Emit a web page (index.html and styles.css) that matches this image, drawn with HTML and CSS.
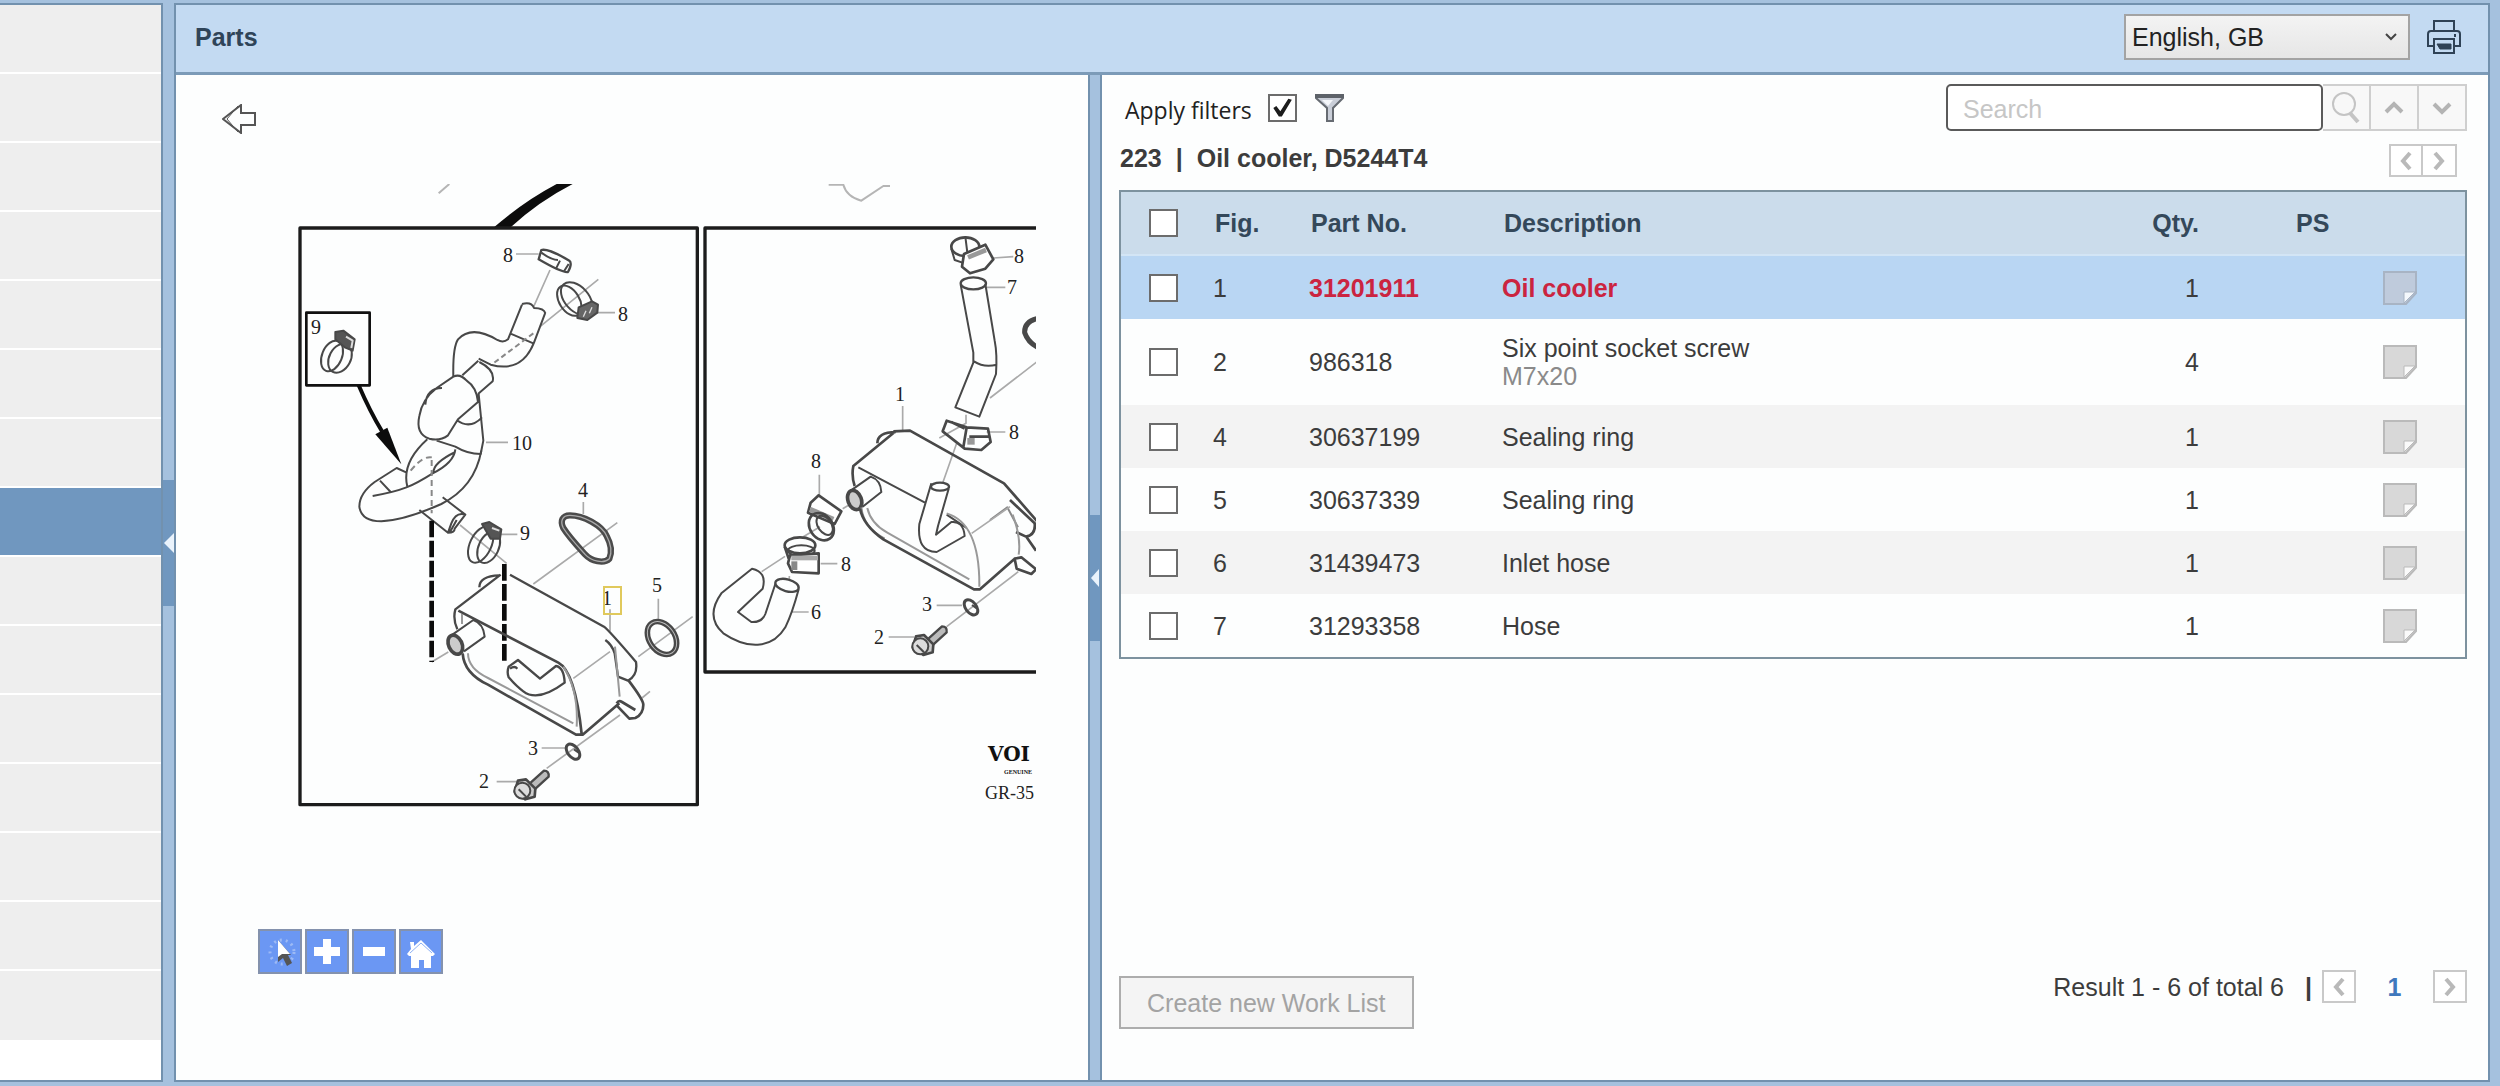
FILE: index.html
```html
<!DOCTYPE html>
<html lang="en-GB">
<head>
<meta charset="utf-8">
<meta name="viewport" content="width=device-width, initial-scale=1">
<title>Parts</title>
<link rel="stylesheet" href="styles.css">
</head>
<body>
<div class="app">
  <ul class="sidebar" aria-label="Groups">
    <li></li><li></li><li></li><li></li><li></li><li></li><li></li>
    <li class="selected"></li>
    <li></li><li></li><li></li><li></li><li></li><li></li><li></li>
  </ul>
  <div class="splitter">
    <button class="splitter-handle" aria-label="Collapse group list"><svg width="10" height="20" viewBox="0 0 10 20"><path d="M10 0v20L0 10z" fill="#eaf3fc"/></svg></button>
  </div>
  <main class="main">
    <header class="titlebar">
      <h1>Parts</h1>
      <div class="select-box">
        <select aria-label="Language"><option>English, GB</option></select>
        <svg width="12" height="8" viewBox="0 0 12 8" fill="none" stroke="#444" stroke-width="2"><path d="M1 1l5 5 5-5"/></svg>
      </div>
      <button class="icon-button" aria-label="Print">
        <svg width="34" height="34" viewBox="0 0 34 34" fill="none" stroke="#2f4256" stroke-width="2"><path d="M7 11V1h20v10M6 26H1V14q0-3 3-3h26q3 0 3 3v12h-5"/><path d="M7 19h20v14H7z"/><path d="M10 24h14v5H13z" fill="#2f4256" stroke-width="1"/><path d="M28 14v3" /></svg>
      </button>
    </header>
    <div class="panes">
      <section class="viewer" aria-label="Illustration">
        <button class="icon-button" aria-label="Back">
          <svg width="34" height="30" viewBox="0 0 34 30" fill="none" stroke="#555" stroke-width="2"><path d="M1 15L19 1v8h14v12H19v8z"/><path d="M16 2L5 15l11 13" stroke-width="1"/></svg>
        </button>
        <svg class="diagram" width="746" height="640" viewBox="0 0 746 640" role="img" aria-label="Oil cooler exploded view">
          <!-- left frame, upper half: clamps and hose -->
          <g transform="translate(0 -14) scale(.33333)" fill="none" stroke="#484848" stroke-width="6" stroke-linejoin="round">
            <path d="M446 70l32-28" stroke="#b5b5b5"/>
            <path d="M612 172Q700 95 800 42h48Q745 95 662 172z" fill="#0c0c0c" stroke="none"/>
            <path d="M30 174H1222V1904H30z" stroke="#1c1c1c" stroke-width="10"/>
            <path d="M49 428H239V646H49z" stroke="#111" stroke-width="8"/>
            <g id="clamp9"><ellipse cx="126" cy="558" rx="30" ry="48" transform="rotate(22 126 558)"/><ellipse cx="150" cy="565" rx="32" ry="46" transform="rotate(28 150 565)"/><path d="M136 486l24-4 34 26-6 34-24-10-28-24z" fill="#555"/><path d="M168 500l20 12-4 22"  stroke="#ddd"/></g>
            <path d="M206 646Q240 725 276 784" stroke="#0c0c0c" stroke-width="12"/>
            <path d="M256 793l36-20 42 110z" fill="#0c0c0c" stroke="none"/>
            <g stroke="#aaa" stroke-width="5"><path d="M678 252h68M780 300l-50 112M750 470L925 328M915 428h60M588 817h66"/></g>
            <path d="M754 240q20-6 84 32 10 8-4 34-16 4-88-38z" stroke-width="7"/><path d="M754 248q30 22 50 22M810 272l-12 24M836 282l-14 22"/>
            <ellipse cx="860" cy="386" rx="36" ry="58" transform="rotate(-42 860 386)"/><ellipse cx="838" cy="392" rx="30" ry="50" transform="rotate(-32 838 392)"/>
            <path d="M866 412l40-18 18 10-2 24-30 22-30-6z" fill="#666"/><path d="M880 440l8-18M898 430l8-18" stroke="#ddd" stroke-width="4"/>
            <path d="M696 404l-42 104q-14 12-32 2c-50-30-90-32-118-2q-16 24-14 112M766 428l-34 90c-24 60-64 84-130 66l-36-18M696 402q28-8 36 12 30 0 34 16M660 490l70 30M565 572l-48 44M568 576q48 24 40 58l-44 38"/>
            <path d="M730 490l-120 90" stroke-dasharray="16 10" stroke="#888"/>
            <path d="M490 620q20-10 40 12 30 20 34 64l-60 52-30 48q-24 18-56 10-42-14-30-68 8-50 52-84zM406 704q4-50 50-50M500 750q40 30 76-8M566 672l14 140-8 40q-40 0-76-22l-56-18"/>
            <path d="M412 808q-78 70-60 142M496 838q-4 40-68 72c-60 38-90 52-180 68M574 842q-20 110-120 160c-90 40-140 50-180 52q-60 0-66-44 0-40 46-74l66-42 30 14M430 908q0-30 66-62M270 932l32 34"/>
            <path d="M362 902q40-50 70-38M425 870v160" stroke-dasharray="18 12" stroke="#888"/>
            <path d="M388 1020l86 68q20 0 20-12l32-42-68-52M526 1034q-28-10-42 26l-10 28M500 1050l-20 36"/>
          </g>
          <!-- left frame, lower half: oil cooler -->
          <g transform="translate(0 316) scale(.33333)" fill="none" stroke="#484848" stroke-width="6" stroke-linejoin="round">
            <g stroke="#aaa" stroke-width="5"><path d="M510 75l140 115M632 103h50M730 252L982 68M880 6v36M960 328v66M1105 296v64M1045 470L1208 350M850 535L960 455M425 486l50-30M990 645L770 805M1080 574l-24 20M755 744h70M620 845h66"/></g>
            <path d="M425 62v424M643 192v294" stroke="#0c0c0c" stroke-width="14" stroke-dasharray="50 10"/>
            <ellipse cx="572" cy="134" rx="32" ry="58" transform="rotate(25 572 134)"/><ellipse cx="596" cy="142" rx="30" ry="50" transform="rotate(25 596 142)"/><path d="M576 72l22-6 36 22-4 28-28 0z" fill="#555"/><path d="M606 84l22 8" stroke="#ddd"/>
            <g id="gasket4"><path d="M840 46c40 0 96 30 110 62 14 26 16 50 8 68-16 16-54 8-72-12-20-22-50-54-66-80-10-20-4-38 20-38z" stroke="#4b4b4b" stroke-width="19"/><path d="M840 46c40 0 96 30 110 62 14 26 16 50 8 68-16 16-54 8-72-12-20-22-50-54-66-80-10-20-4-38 20-38z" stroke="#aaa" stroke-width="4"/></g>
            <ellipse cx="1116" cy="414" rx="38" ry="54" transform="rotate(-35 1116 414)" stroke-width="17"/><ellipse cx="1116" cy="414" rx="38" ry="54" transform="rotate(-35 1116 414)" stroke-width="3" stroke="#bbb"/>
            <g class="cooler"><path d="M632 224L496 328q-8 30 6 60M660 224L942 380q14 10 96 106 6 40-24 56l-30-12-10-70q-8-26-28-40M568 262q0-34 60-36" stroke-width="7"/>
            <path d="M505 332l300 156q50 26 70 214M518 460q4 60 76 94l264 150 20 0 110-94M980 610q6-10 16-4l40 24M1016 542q44 58 44 72 0 28-24 40l-18 2-38-40" stroke-width="8"/>
            <path d="M516 342v30M534 460q0 46 60 74l256 136M820 500q46 70 40 180M975 440l14 150" stroke="#999"/>
            <ellipse cx="496" cy="434" rx="20" ry="30" transform="rotate(-25 496 434)" fill="#ccc" stroke-width="11"/><path d="M484 406l66-46q30 10 34 50l-62 44"/></g>
            <path d="M656 500l28-20 66 56 48-38q24 4 26 50-80 60-124 26-20-14-44-42-6-16 0-32zM660 506q14-10 22 0" stroke-width="7"/>
            <g id="bolt"><path d="M722 848l40-36q16 0 14 18l-46 42" fill="#bbb" stroke-width="7"/><path d="M684 842l24-4 28 28-2 24-28 8-32-22z" fill="#ccc" stroke-width="8"/><circle cx="697" cy="872" r="24" fill="#ddd"/><path d="M686 868l22 22"/></g>
            <g id="washer"><ellipse cx="849" cy="755" rx="16" ry="26" transform="rotate(-38 849 755)" stroke-width="9"/><path d="M852 748l14 10"/></g>
          </g>
          <!-- right frame, upper half -->
          <g transform="translate(400 -14) scale(.33333)" fill="none" stroke="#484848" stroke-width="6" stroke-linejoin="round">
            <path d="M416 44h44q10 36 54 48l66-44h20" stroke="#b5b5b5"/>
            <path d="M1060 174H45V1506H1060" stroke="#1c1c1c" stroke-width="10"/>
            <g stroke="#aaa" stroke-width="5"><path d="M910 264l60-4M890 352h56M900 684l140-108M638 708v74M890 786h56M388 914v66M828 734v26l-80 44M800 820l-48 136M458 1016l20-12"/></g>
            <ellipse cx="826" cy="230" rx="42" ry="28" stroke-width="8"/><path d="M784 236l10 34 30 10M826 200l6 48" stroke-width="6"/><path d="M822 252l64-28 24 44-24 28-46 14-24-20z" fill="#fff" stroke-width="8"/><path d="M834 262l54-22" stroke="#999" stroke-width="14"/>
            <ellipse cx="850" cy="340" rx="38" ry="18" stroke-width="7"/>
            <path d="M812 344l38 204v30l-54 134 72 28 50-128q4-60-4-100l-28-170M852 574q30 20 68 10" />
            <path d="M1050 444q-48 8-46 44 10 30 40 44" stroke-width="15"/>
            <path d="M770 752l60 20 64 4 8 40-28 24-50-4-66-52zM830 772l-10 60M838 800h60M784 756l40 20" stroke-width="8"/><path d="M832 804h22v20h-22z" fill="#999" stroke="none"/>
            <path d="M614 786L490 888q-6 30 4 60M610 784l50-2L942 940l110 126M562 820q0-34 56-34" stroke-width="8"/>
            <path d="M505 892l200 106M770 1034l60 40" stroke-width="6"/><ellipse cx="494" cy="990" rx="20" ry="30" transform="rotate(-20 494 990)" fill="#ccc" stroke-width="11"/><path d="M482 962l60-42q30 10 32 46l-56 44"/>
            <path d="M514 1012q6 60 70 94M900 1050l52-38 32 60" stroke="#888"/>
          </g>
          <!-- right frame, lower half -->
          <g transform="translate(400 316) scale(.33333)" fill="none" stroke="#484848" stroke-width="6" stroke-linejoin="round">
            <g stroke="#aaa" stroke-width="5"><path d="M845 100l115-80M340 110l50-30M215 215l70-46M392 191h50M306 336h50M740 316h76M596 411h76M985 215L770 380M298 228v14"/></g>
            <path d="M510 26q10 50 70 92l272 150 18 0 104-92M960 0l74 70q4 34-26 40l-30-14M1010 112l28 40M974 176l20-4 44 36-14 14-44-16z" stroke-width="8"/>
            <path d="M532 24q10 46 60 74l246 140M770 40q100 30 98 220M968 44q26 70 18 120" stroke="#999"/>
            <path d="M724-50L688 72q-8 84 52 84l84-48q-4-46-40-42l-46 38 6-26L776-34" fill="#fff" stroke-width="6"/><ellipse cx="750" cy="-40" rx="27" ry="12" fill="#fff" stroke-width="7"/>
            <path d="M386-14l68 48-20 38-80-34 8-30z" fill="#fff" stroke-width="8"/><path d="M360 28l70 30" stroke="#999" stroke-width="16"/><ellipse cx="394" cy="80" rx="34" ry="44" transform="rotate(-35 394 80)" stroke-width="8"/><ellipse cx="404" cy="76" rx="20" ry="32" transform="rotate(-35 404 76)"/>
            <ellipse cx="330" cy="136" rx="46" ry="24" stroke-width="8"/><ellipse cx="334" cy="152" rx="40" ry="16"/><path d="M284 140l12 36" stroke-width="8"/><path d="M300 166l86-6v60l-80-4-12-26z" fill="#fff" stroke-width="8"/><path d="M304 174h80" stroke="#aaa" stroke-width="14"/><path d="M304 184h18v26h-18z" fill="#888" stroke="none"/>
            <path d="M256 252l-30 90q-10 26-42 24l-40-30 74-70q14-50-32-60L94 280q-50 70 6 120c80 54 150 42 186-18q20-40 40-114" />
            <ellipse cx="291" cy="256" rx="36" ry="18" transform="rotate(15 291 256)" stroke-width="7"/>
            <use href="#bolt" x="-6" y="-433"/><use href="#washer" x="-6" y="-433"/>
          </g>
          <g class="callouts">
            <text x="213" y="78">8</text><text x="328" y="137">8</text><text x="21" y="150">9</text><text x="222" y="266">10</text>
            <text x="288" y="313">4</text><text x="230" y="356">9</text><text x="312" y="421">1</text><text x="362" y="408">5</text>
            <text x="238" y="571">3</text><text x="189" y="604">2</text>
            <text x="724" y="79">8</text><text x="717" y="110">7</text><text x="605" y="217">1</text><text x="719" y="255">8</text>
            <text x="521" y="284">8</text><text x="551" y="387">8</text><text x="521" y="435">6</text><text x="632" y="427">3</text><text x="584" y="460">2</text>
          </g>
          <text class="drawing-no" x="695" y="615">GR-35</text>
          <text class="brand" x="698" y="577">VOI</text>
          <text class="brand-sub" x="714" y="590">GENUINE</text>
          <path d="M314 403h17v27h-17z" fill="none" stroke="#e0c95c" stroke-width="2"/>
        </svg>
        <div class="view-tools">
          <button aria-label="Pointer"><svg width="40" height="40" viewBox="0 0 40 40"><circle cx="22" cy="20" r="12" fill="none" stroke="#9dbaf5" stroke-width="3" stroke-dasharray="2 4"/><path d="M18 8v22l5-4 4 8 5-3-4-8h3z" fill="#555"/><path d="M18 8v17l4-3h8z" fill="#fff"/></svg></button>
          <button aria-label="Zoom in"><svg width="40" height="40" viewBox="0 0 40 40"><path d="M16 7h8v8h9v9h-9v8h-8v-8H7v-9h9z" fill="#fff"/></svg></button>
          <button aria-label="Zoom out"><svg width="40" height="40" viewBox="0 0 40 40"><path d="M9 15h22v9H9z" fill="#fff"/></svg></button>
          <button aria-label="Home"><svg width="40" height="40" viewBox="0 0 40 40"><path d="M9 10h4v4l7-6 14 14-2 2h-2v12h-7v-8h-5v8h-8V24H8l-2-2 4-5z" fill="#fff"/><path d="M9 21l11-10 11 10" fill="none" stroke="#8fb2f5" stroke-width="1"/></svg></button>
        </div>
      </section>
      <div class="splitter pane-splitter">
        <button class="splitter-handle" aria-label="Collapse illustration"><svg width="8" height="18" viewBox="0 0 8 18"><path d="M8 0v18L0 9z" fill="#eaf3fc"/></svg></button>
      </div>
      <section class="list" aria-label="Part list">
        <div class="list-tools">
          <label class="filter-label" for="filters">Apply filters</label>
          <input class="check" type="checkbox" id="filters" checked>
          <button class="icon-button funnel" aria-label="Edit filters"><svg width="29" height="28" viewBox="0 0 29 28"><path d="M1 1h27v3L18 14v13h-6V14L1 4z" fill="#c9ced8" stroke="#666b72" stroke-width="2"/><path d="M0 0h29v4H0z" fill="#5d6269"/><path d="M7 6h11l-5 6z" fill="#f4f6fa"/></svg></button>
          <form class="search">
            <input type="search" placeholder="Search" aria-label="Search parts">
            <button type="button" aria-label="Find"><svg width="32" height="34" viewBox="0 0 32 34" fill="none" stroke="#c4c4c4"><circle cx="14" cy="13" r="11" stroke-width="2"/><path d="M20 22l8 9" stroke-width="4"/></svg></button>
            <button type="button" aria-label="Previous match"><svg width="20" height="14" viewBox="0 0 20 14" fill="none" stroke="#b4b4b4" stroke-width="4"><path d="M2 11l8-8 8 8"/></svg></button>
            <button type="button" aria-label="Next match"><svg width="20" height="14" viewBox="0 0 20 14" fill="none" stroke="#b4b4b4" stroke-width="4"><path d="M2 3l8 8 8-8"/></svg></button>
          </form>
        </div>
        <div class="list-heading">
          <h2><span>223</span><span>|</span><span>Oil cooler, D5244T4</span></h2>
          <div class="step">
            <button aria-label="Previous group"><svg width="12" height="20" viewBox="0 0 12 20"><path d="M10 2L3 10l7 8"/></svg></button>
            <button aria-label="Next group"><svg width="12" height="20" viewBox="0 0 12 20"><path d="M2 2l7 8-7 8"/></svg></button>
          </div>
        </div>
        <table class="parts">
          <thead>
            <tr><th class="c-check"><input class="check" type="checkbox" aria-label="Select all"></th><th class="c-fig">Fig.</th><th class="c-no">Part No.</th><th>Description</th><th class="c-qty">Qty.</th><th class="c-ps">PS</th><th class="c-note"></th></tr>
          </thead>
          <tbody>
            <tr class="current"><td class="c-check"><input class="check" type="checkbox" aria-label="Select 31201911"></td><td>1</td><td class="hot">31201911</td><td class="hot">Oil cooler</td><td class="c-qty">1</td><td></td><td><button class="note" aria-label="Note"><svg width="34" height="34" viewBox="0 0 34 34"><path d="M1 1h32v21L23 33H1z"/><path class="fold" d="M21 32V21h11z"/></svg></button></td></tr>
            <tr class="two-line"><td class="c-check"><input class="check" type="checkbox" aria-label="Select 986318"></td><td>2</td><td>986318</td><td>Six point socket screw<br><span class="muted">M7x20</span></td><td class="c-qty">4</td><td></td><td><button class="note" aria-label="Note"><svg width="34" height="34" viewBox="0 0 34 34"><path d="M1 1h32v21L23 33H1z"/><path class="fold" d="M21 32V21h11z"/></svg></button></td></tr>
            <tr class="alt"><td class="c-check"><input class="check" type="checkbox" aria-label="Select 30637199"></td><td>4</td><td>30637199</td><td>Sealing ring</td><td class="c-qty">1</td><td></td><td><button class="note" aria-label="Note"><svg width="34" height="34" viewBox="0 0 34 34"><path d="M1 1h32v21L23 33H1z"/><path class="fold" d="M21 32V21h11z"/></svg></button></td></tr>
            <tr><td class="c-check"><input class="check" type="checkbox" aria-label="Select 30637339"></td><td>5</td><td>30637339</td><td>Sealing ring</td><td class="c-qty">1</td><td></td><td><button class="note" aria-label="Note"><svg width="34" height="34" viewBox="0 0 34 34"><path d="M1 1h32v21L23 33H1z"/><path class="fold" d="M21 32V21h11z"/></svg></button></td></tr>
            <tr class="alt"><td class="c-check"><input class="check" type="checkbox" aria-label="Select 31439473"></td><td>6</td><td>31439473</td><td>Inlet hose</td><td class="c-qty">1</td><td></td><td><button class="note" aria-label="Note"><svg width="34" height="34" viewBox="0 0 34 34"><path d="M1 1h32v21L23 33H1z"/><path class="fold" d="M21 32V21h11z"/></svg></button></td></tr>
            <tr><td class="c-check"><input class="check" type="checkbox" aria-label="Select 31293358"></td><td>7</td><td>31293358</td><td>Hose</td><td class="c-qty">1</td><td></td><td><button class="note" aria-label="Note"><svg width="34" height="34" viewBox="0 0 34 34"><path d="M1 1h32v21L23 33H1z"/><path class="fold" d="M21 32V21h11z"/></svg></button></td></tr>
          </tbody>
        </table>
        <footer class="list-footer">
          <button class="work-list" disabled>Create new Work List</button>
          <nav class="pager" aria-label="Result pages">
            <span>Result 1 - 6 of total 6</span><span class="bar">|</span>
            <button aria-label="Previous page"><svg width="12" height="20" viewBox="0 0 12 20"><path d="M10 2L3 10l7 8"/></svg></button>
            <a href="#">1</a>
            <button aria-label="Next page"><svg width="12" height="20" viewBox="0 0 12 20"><path d="M2 2l7 8-7 8"/></svg></button>
          </nav>
        </footer>
      </section>
    </div>
  </main>
</div>
</body>
</html>
```

FILE: styles.css
```css
* { box-sizing: border-box; }

body {
  margin: 0;
  background: #a5c1de;
  color: #3c3c3c;
  font: 25px/28px "Liberation Sans", Arial, sans-serif;
}

h1, h2 { margin: 0; font-size: 25px; line-height: 28px; }

button, input, select { font: inherit; color: inherit; }

button {
  display: flex;
  align-items: center;
  justify-content: center;
  margin: 0;
  padding: 0;
}

svg { display: block; flex: none; }

.app {
  display: flex;
  min-height: 100vh;
  padding: 3px 10px 4px 0;
}

/* Group list */
.sidebar {
  flex: none;
  width: 163px;
  margin: 0;
  padding: 0;
  list-style: none;
  background: #fff;
  border: solid #7291ae;
  border-width: 2px 2px 2px 0;
}

.sidebar li {
  height: 69px;
  background: #eee;
  border-bottom: 2px solid #fff;
}

.sidebar li:last-child { border-bottom: 0; }

.sidebar .selected { background: #7097bf; }

/* Splitters */
.splitter {
  display: flex;
  flex: none;
  align-items: center;
  width: 11px;
  background: #a5c1de;
}

.pane-splitter {
  width: 14px;
  border: solid #7291ae;
  border-width: 0 2px;
}

.splitter-handle {
  width: 100%;
  height: 126px;
  border: 0;
  background: #7097bf;
}

/* Main panel */
.main {
  display: flex;
  flex: 1;
  flex-direction: column;
  min-width: 0;
  background: #fdfefe;
  border: 2px solid #7291ae;
}

.titlebar {
  display: flex;
  align-items: center;
  height: 70px;
  padding: 0 27px 3px 19px;
  background: #c3daf2;
  border-bottom: 3px solid #7c9bb8;
}

.titlebar h1 { margin-right: auto; color: #2f4459; }

.select-box {
  display: grid;
  align-items: center;
  margin-right: 17px;
}

.select-box select {
  grid-area: 1 / 1;
  width: 286px;
  height: 46px;
  padding: 0 6px;
  appearance: none;
  border: 2px solid #a3a3a3;
  border-radius: 0;
  background: linear-gradient(#f3f3f3, #e6e6e6);
  color: #222;
}

.select-box svg {
  grid-area: 1 / 1;
  justify-self: end;
  margin-right: 13px;
  pointer-events: none;
}

.icon-button { border: 0; background: none; }

.panes {
  display: grid;
  flex: 1;
  grid-template-columns: minmax(0, 912fr) 14px minmax(0, 1386fr);
}

/* Illustration */
.viewer {
  display: flex;
  flex-direction: column;
  align-items: flex-start;
  padding: 29px 50px 106px 46px;
}

.diagram {
  margin: 50px 0 0 68px;
  overflow: hidden;
}

.callouts { font: 20px "Liberation Serif", serif; fill: #222; }

.drawing-no { font: 18px "Liberation Serif", serif; fill: #222; }

.brand { font: bold 20px "DejaVu Serif", serif; fill: #111; }

.brand-sub { font: bold 6px "Liberation Serif", serif; fill: #111; }

.view-tools {
  display: flex;
  gap: 3px;
  margin: auto 0 0 36px;
}

.view-tools button {
  width: 44px;
  height: 45px;
  border: 2px solid #8492ad;
  background: #6b97f3;
}

/* Part list */
.list {
  display: flex;
  flex-direction: column;
  padding: 9px 21px 51px 17px;
}

.list-tools {
  display: flex;
  align-items: center;
  height: 47px;
  padding-left: 6px;
}

.filter-label {
  margin-right: 16px;
  padding-top: 4px;
  color: #222;
  font: 23px/28px "Open Sans", "Noto Sans", sans-serif;
}

.check {
  display: block;
  width: 29px;
  height: 28px;
  margin: 0;
  appearance: none;
  border: 2px solid #6c6c6c;
  background: #fff;
}

.check:checked::before {
  content: "";
  display: block;
  height: 100%;
  background: #1c1c1c;
  clip-path: polygon(14% 52%, 26% 44%, 42% 66%, 74% 14%, 88% 18%, 48% 88%, 36% 88%);
}

.funnel { margin-left: 18px; }

.search { display: flex; margin-left: auto; }

.search input {
  width: 377px;
  height: 47px;
  padding: 4px 15px 0;
  appearance: none;
  border: 2px solid #5a5a5a;
  border-radius: 5px;
  background: #fff;
}

.search input::placeholder { color: #c6c6c6; opacity: 1; }

.search button {
  width: 48px;
  height: 47px;
  border: solid #cfcfcf;
  border-width: 2px 2px 2px 0;
  background: #f8f8f8;
}

.list-heading {
  display: flex;
  align-items: flex-start;
  justify-content: space-between;
  margin: 13px 10px 13px 1px;
}

.list-heading h2 { display: flex; gap: 14px; }

.step { display: flex; }

.step button, .pager button {
  width: 34px;
  height: 33px;
  border: 2px solid #c9c9c9;
  background: #fff;
}

.step button + button { border-left: 0; }

.step path, .pager path { fill: none; stroke: #b9b9b9; stroke-width: 4; }

.parts {
  width: 100%;
  table-layout: fixed;
  border: 2px solid #7d929f;
  border-collapse: separate;
  border-spacing: 0;
}

.parts th, .parts td { padding: 0; text-align: left; }

.parts th {
  height: 64px;
  padding-left: 2px;
  background: #cbdceb;
  border-bottom: 2px solid #d3e5f5;
  color: #34485a;
}

.parts td { height: 63px; }

.parts .two-line td { height: 86px; }

.parts .c-check { width: 92px; padding-left: 28px; }

.parts .c-fig { width: 96px; }

.parts .c-no { width: 193px; }

.parts .c-qty { width: 99px; text-align: right; }

.parts .c-ps { width: 184px; padding-left: 97px; }

.parts .c-note { width: 82px; }

.current td { background: #b9d6f3; }

.alt td { background: #f3f3f3; }

.parts .hot { color: #cb2440; font-weight: bold; }

.muted { color: #8a8a8a; }

.note { border: 0; background: none; }

.note path { fill: #d8d8d8; stroke: #bababa; stroke-width: 2; }

.note .fold { fill: #fafafa; stroke-width: 1; }

.current .note path { fill: #bfcbdc; stroke: #a8b4c4; }

.current .note .fold { fill: #f4f8fc; }

.list-footer {
  display: flex;
  align-items: flex-start;
  justify-content: space-between;
  margin-top: auto;
}

.work-list {
  height: 53px;
  margin-top: 6px;
  padding: 0 26px;
  border: 2px solid #adadad;
  background: #f4f4f4;
  color: #a3a3a3;
}

.pager { display: flex; align-items: center; }

.pager .bar { margin: 0 10px 0 21px; font-weight: bold; }

.pager a {
  width: 77px;
  color: #3f78bd;
  font-weight: bold;
  text-align: center;
  text-decoration: none;
}
```
